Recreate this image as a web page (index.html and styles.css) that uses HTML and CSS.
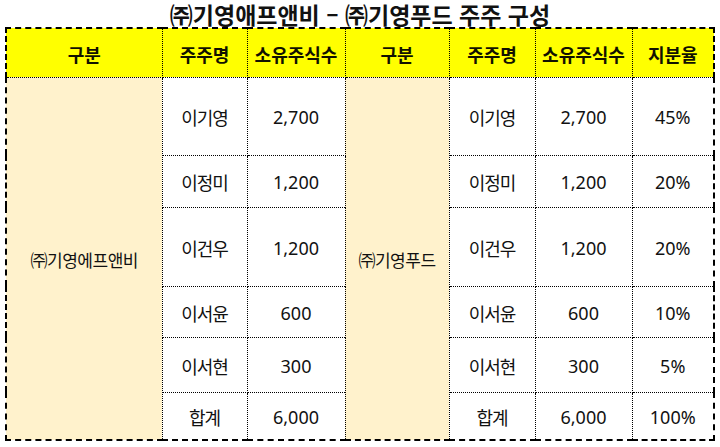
FILE: index.html
```html
<!DOCTYPE html>
<html lang="ko">
<head>
<meta charset="utf-8">
<link rel="stylesheet" href="styles.css">
</head>
<body>
<h1 class="title">㈜기영애프앤비 – ㈜기영푸드 주주 구성</h1>
<table class="sheet">
  <colgroup>
    <col class="c-co1"><col class="c-name1"><col class="c-shares1">
    <col class="c-co2"><col class="c-name2"><col class="c-shares2"><col class="c-pct">
  </colgroup>
  <thead>
    <tr class="head">
      <th>구분</th><th>주주명</th><th>소유주식수</th>
      <th>구분</th><th>주주명</th><th>소유주식수</th><th>지분율</th>
    </tr>
  </thead>
  <tbody>
    <tr class="r1">
      <td class="co" rowspan="6">㈜기영에프앤비</td><td>이기영</td><td class="num">2,700</td>
      <td class="co" rowspan="6">㈜기영푸드</td><td>이기영</td><td class="num">2,700</td><td class="num">45%</td>
    </tr>
    <tr class="r2"><td>이정미</td><td class="num">1,200</td><td>이정미</td><td class="num">1,200</td><td class="num">20%</td></tr>
    <tr class="r3"><td>이건우</td><td class="num">1,200</td><td>이건우</td><td class="num">1,200</td><td class="num">20%</td></tr>
    <tr class="r4"><td>이서윤</td><td class="num">600</td><td>이서윤</td><td class="num">600</td><td class="num">10%</td></tr>
    <tr class="r5"><td>이서현</td><td class="num">300</td><td>이서현</td><td class="num">300</td><td class="num">5%</td></tr>
    <tr class="r6"><td>합계</td><td class="num">6,000</td><td>합계</td><td class="num">6,000</td><td class="num">100%</td></tr>
  </tbody>
</table>
</body>
</html>
```
FILE: styles.css
```css
html, body {
  margin: 0;
  padding: 0;
  background: #ffffff;
}
body {
  width: 720px;
  height: 447px;
  overflow: hidden;
  font-family: "Noto Sans CJK KR", "Noto Sans", sans-serif;
  color: #111111;
}
.title {
  margin: 0;
  padding-top: 2px;
  height: 25px;
  line-height: 25px;
  font-size: 23px;
  font-weight: 700;
  text-align: center;
  color: #111111;
  overflow: visible;
}
.sheet {
  margin-left: 5px;
  border-collapse: collapse;
  table-layout: fixed;
  width: 710px;
  border: 2px dashed #000000;
}
.c-co1 { width: 156px; }
.c-name1 { width: 85px; }
.c-shares1 { width: 98px; }
.c-co2 { width: 104px; }
.c-name2 { width: 86px; }
.c-shares2 { width: 97px; }
.c-pct { width: 82px; }
.sheet th,
.sheet td {
  border: 1px dotted #000000;
  padding: 2px 0 0 0;
  text-align: center;
  vertical-align: middle;
  white-space: nowrap;
}
.sheet th {
  background: #ffff00;
  font-size: 18px;
  font-weight: 700;
  color: #111100;
}
.sheet td {
  font-size: 18px;
  letter-spacing: -1px;
  font-weight: 400;
  background: #ffffff;
}
.sheet td.num {
  font-family: "Noto Sans", "Noto Sans CJK KR", sans-serif;
  font-size: 18px;
  letter-spacing: 0;
}
.sheet td.co {
  background: #fff2cc;
  font-size: 17px;
  letter-spacing: -0.5px;
}
.head { height: 49px; }
.r1 { height: 78px; }
.r2 { height: 52px; }
.r3 { height: 79px; }
.r4 { height: 51px; }
.r5 { height: 55px; }
.r6 { height: 48px; }
```
